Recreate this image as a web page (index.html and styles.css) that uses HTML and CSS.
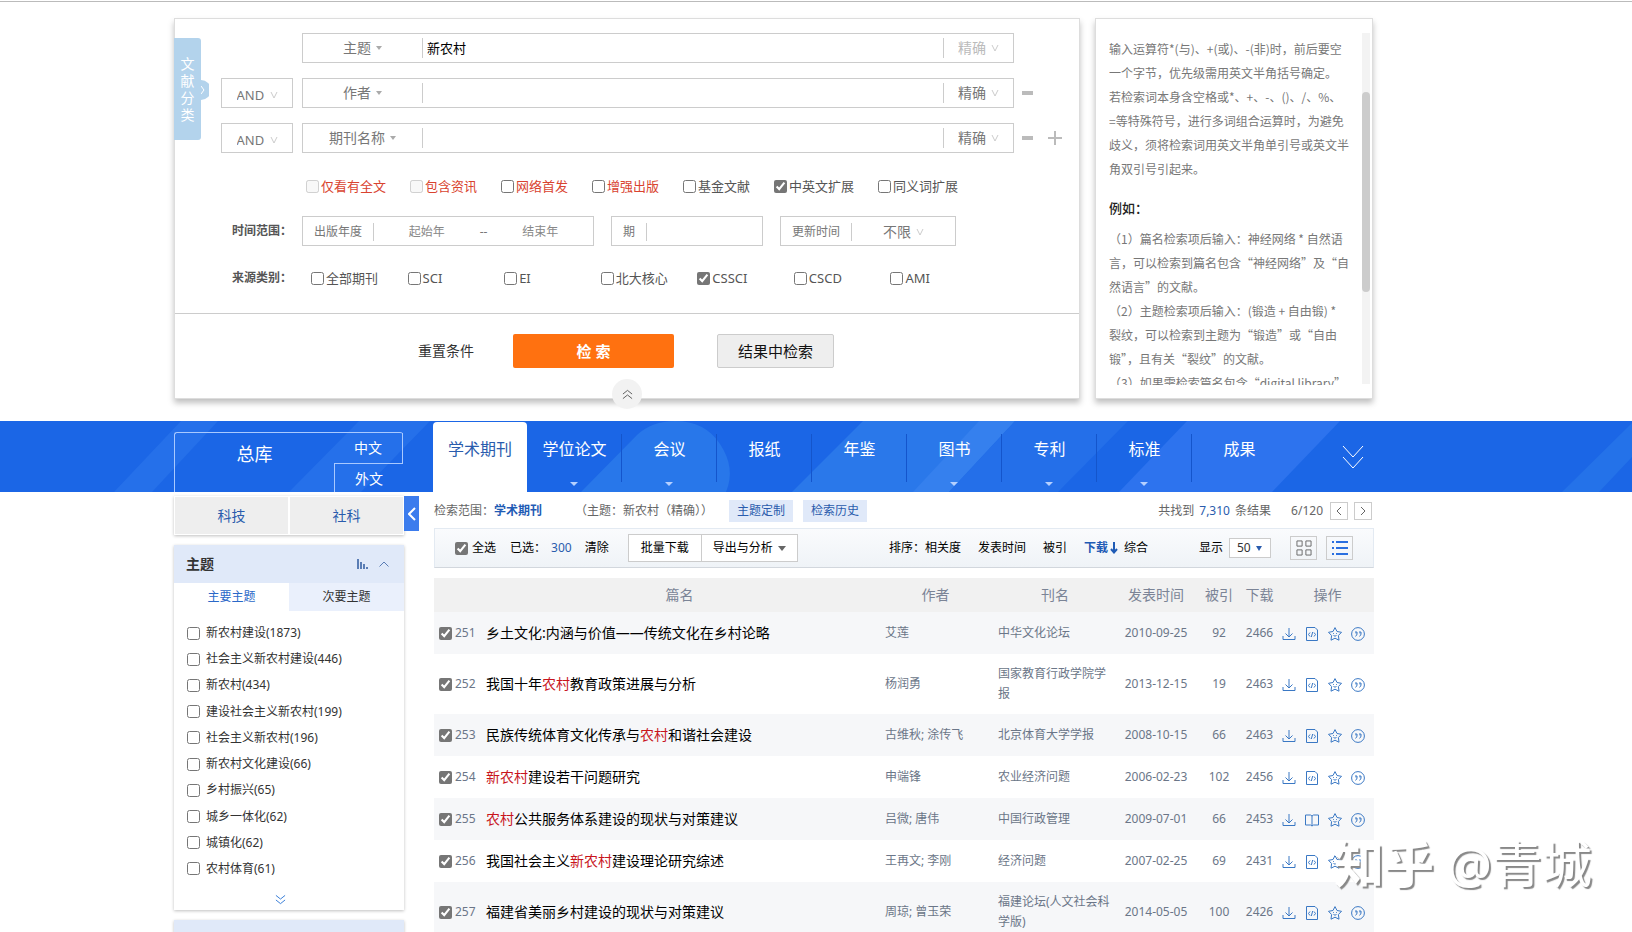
FILE: index.html
```
<!DOCTYPE html>
<html lang="zh-CN">
<head>
    <meta charset="UTF-8">
    <meta name="viewport" content="width=device-width, initial-scale=1.0">
    <title>高级检索</title>
    <link rel="stylesheet" href="styles.css">
</head>
<body>
    <svg class="icon-defs" aria-hidden="true">
        <symbol id="i-down" viewBox="0 0 14 14"><path d="M7 1v9M3.500 6.500L7 10l3.500-3.500M1 9v3.500h12V9" /></symbol>
        <symbol id="i-html" viewBox="0 0 14 14"><path d="M1.500 .5h8.500l2.500 2.500v10.500h-11zM5 5.500L3.500 7.500L5 9.500M9 5.500l1.500 2L9 9.500M7.700 5L6.300 10" /></symbol>
        <symbol id="i-book" viewBox="0 0 14 14"><path d="M.5 2h5L7 3l1.500-1h5v10h-5L7 13l-1.500-1h-5zM7 3v10" /></symbol>
        <symbol id="i-star" viewBox="0 0 14 14"><path d="M7 .6l2 3.900 4.500 .8-3.100 3.200 .6 4.700L7 11.200l-4 2 .6-4.700L.5 5.300l4.500-.8z" /><path d="M5 6.500h.8M8.200 6.500H9M5.500 8.500q1.500 1.300 3 0" /></symbol>
        <symbol id="i-quote" viewBox="0 0 14 14"><circle cx="7" cy="7" r="6.400" /><path d="M4 5h2v2q0 1.700-1.700 2.300M8 5h2v2q0 1.700-1.700 2.300M4.500 6h1M8.500 6h1" /></symbol>
        <symbol id="i-v" viewBox="0 0 8 8"><path d="M1 1l3 6 3-6" /></symbol>
        <symbol id="i-double" viewBox="0 0 12 12"><path d="M1 1.500l5 4 5-4M1 6.500l5 4 5-4" /></symbol>
    </svg>

    <div class="top-line"></div>

    <div class="search-area">
        <form class="search-panel">
            <button type="button" class="side-tab">文<br>献<br>分<br>类
                <svg class="side-arrow" viewBox="0 0 8 20"><path d="M0 0a10 10 0 0 1 0 20z" fill="#b3d3ec" /><path d="M0 6l3 4-3 4" fill="none" stroke="#fff" /></svg>
            </button>

            <div class="rows">
                <div class="row">
                    <div class="logic-space"></div>
                    <div class="field">
                        <div class="pick"><select aria-label="检索项"><option>主题</option></select><i class="caret"></i></div>
                        <input type="text" aria-label="检索词" value="新农村">
                        <div class="match off"><select aria-label="匹配方式"><option>精确</option></select><svg class="v"><use href="#i-v" /></svg></div>
                    </div>
                    <div class="ops"></div>
                </div>
                <div class="row">
                    <div class="logic"><select aria-label="逻辑关系"><option>AND</option></select><svg class="v"><use href="#i-v" /></svg></div>
                    <div class="field">
                        <div class="pick"><select aria-label="检索项"><option>作者</option></select><i class="caret"></i></div>
                        <input type="text" aria-label="检索词">
                        <div class="match"><select aria-label="匹配方式"><option>精确</option></select><svg class="v"><use href="#i-v" /></svg></div>
                    </div>
                    <div class="ops"><button type="button" class="minus" aria-label="删除"></button></div>
                </div>
                <div class="row">
                    <div class="logic"><select aria-label="逻辑关系"><option>AND</option></select><svg class="v"><use href="#i-v" /></svg></div>
                    <div class="field">
                        <div class="pick"><select aria-label="检索项"><option>期刊名称</option></select><i class="caret"></i></div>
                        <input type="text" aria-label="检索词">
                        <div class="match"><select aria-label="匹配方式"><option>精确</option></select><svg class="v"><use href="#i-v" /></svg></div>
                    </div>
                    <div class="ops"><button type="button" class="minus" aria-label="删除"></button><button type="button" class="plus" aria-label="增加"></button></div>
                </div>
            </div>

            <div class="options">
                <label class="red"><input type="checkbox" disabled>仅看有全文</label>
                <label class="red"><input type="checkbox" disabled>包含资讯</label>
                <label class="red"><input type="checkbox">网络首发</label>
                <label class="red"><input type="checkbox">增强出版</label>
                <label><input type="checkbox">基金文献</label>
                <label><input type="checkbox" checked>中英文扩展</label>
                <label><input type="checkbox">同义词扩展</label>
            </div>

            <div class="line time-line">
                <b>时间范围：</b>
                <div class="box box-year">
                    <span>出版年度</span>
                    <input type="text" aria-label="起始年" placeholder="起始年">
                    <em>--</em>
                    <input type="text" aria-label="结束年" placeholder="结束年">
                </div>
                <div class="box box-issue"><label for="issue">期</label><input type="text" id="issue"></div>
                <div class="box box-update"><span>更新时间</span><div class="pick-time"><select aria-label="更新时间"><option>不限</option></select><svg class="v"><use href="#i-v" /></svg></div></div>
            </div>

            <div class="line source-line">
                <b>来源类别：</b>
                <div class="sources">
                    <label><input type="checkbox">全部期刊</label>
                    <label><input type="checkbox">SCI</label>
                    <label><input type="checkbox">EI</label>
                    <label><input type="checkbox">北大核心</label>
                    <label><input type="checkbox" checked>CSSCI</label>
                    <label><input type="checkbox">CSCD</label>
                    <label><input type="checkbox">AMI</label>
                </div>
            </div>

            <div class="buttons">
                <button type="reset" class="btn-reset">重置条件</button>
                <button type="button" class="btn-search">检 索</button>
                <button type="button" class="btn-within">结果中检索</button>
            </div>
            <button type="button" class="fold" aria-label="收起"><svg viewBox="0 0 12 12"><use href="#i-double" /></svg></button>
        </form>

        <aside class="help">
            <div class="help-text">
                <p>输入运算符*(与)、+(或)、-(非)时，前后要空<br>一个字节，优先级需用英文半角括号确定。<br>若检索词本身含空格或*、+、-、()、/、%、<br>=等特殊符号，进行多词组合运算时，为避免<br>歧义，须将检索词用英文半角单引号或英文半<br>角双引号引起来。</p>
                <h4>例如：</h4>
                <p>（1）篇名检索项后输入：神经网络 * 自然语<br>言，可以检索到篇名包含“神经网络”及“自<br>然语言”的文献。<br>（2）主题检索项后输入：(锻造 + 自由锻) *<br>裂纹，可以检索到主题为“锻造”或“自由<br>锻”，且有关“裂纹”的文献。<br>（3）如果需检索篇名包含“digital library”</p>
            </div>
            <div class="help-bar"><i></i></div>
        </aside>
    </div>

    <nav class="nav">
        <svg class="nav-bg" viewBox="0 0 1632 71" preserveAspectRatio="none">
            <path d="M181 0h37l-66 71h-38z" fill="#2570ea" />
            <path d="M359 0h71l-69 71h-72z" fill="#2570ea" />
            <path d="M581 71L637 14Q652 0 675 0Q705 0 720 23Q736 47 726 71z" fill="#2877ea" />
            <path d="M863 0h152l-66 71H792z" fill="#2a78ea" />
            <path d="M979 0h36l-66 71h-36z" fill="#3580ee" />
            <path d="M1015 0h113l-70 71H949z" fill="#246fe9" />
            <path d="M1187 0h153l-68 71h-153z" fill="#2d73ee" />
            <path d="M1632 0v36l-33 35h-37l70-69z" fill="#2472e9" />
        </svg>
        <div class="nav-in">
            <div class="all">
                <a href="#" class="all-name">总库</a>
                <div class="langs"><a href="#">中文</a><a href="#">外文</a></div>
            </div>
            <div class="tabs">
                <a href="#" class="on">学术期刊</a>
                <a href="#" class="more">学位论文</a>
                <a href="#" class="more">会议</a>
                <a href="#">报纸</a>
                <a href="#">年鉴</a>
                <a href="#" class="more">图书</a>
                <a href="#" class="more">专利</a>
                <a href="#" class="more">标准</a>
                <a href="#">成果</a>
            </div>
            <button class="nav-more" aria-label="更多"><svg viewBox="0 0 22 24"><path d="M1 1l10 11L21 1M1 12l10 11 10-11" /></svg></button>
        </div>
    </nav>

    <div class="content">
        <div class="sidebar">
            <div class="kinds"><a href="#">科技</a><a href="#">社科</a></div>
            <button class="toggle" aria-label="收起侧栏"><svg viewBox="0 0 8 14"><path d="M7 1L1 7l6 6" /></svg></button>

            <div class="group">
                <div class="group-head">
                    <b>主题</b>
                    <svg class="bars" viewBox="0 0 12 10"><path d="M1 0v10M4 3v7M7 5v5M10 8v2" /></svg>
                    <svg class="up" viewBox="0 0 10 6"><path d="M.5 5.500L5 1l4.500 4.500" /></svg>
                </div>
                <div class="group-tabs"><a href="#" class="on">主要主题</a><a href="#">次要主题</a></div>
                <div class="group-list">
                    <label><input type="checkbox">新农村建设(1873)</label>
                    <label><input type="checkbox">社会主义新农村建设(446)</label>
                    <label><input type="checkbox">新农村(434)</label>
                    <label><input type="checkbox">建设社会主义新农村(199)</label>
                    <label><input type="checkbox">社会主义新农村(196)</label>
                    <label><input type="checkbox">新农村文化建设(66)</label>
                    <label><input type="checkbox">乡村振兴(65)</label>
                    <label><input type="checkbox">城乡一体化(62)</label>
                    <label><input type="checkbox">城镇化(62)</label>
                    <label><input type="checkbox">农村体育(61)</label>
                </div>
                <button class="group-more" aria-label="展开"><svg viewBox="0 0 12 12"><use href="#i-double" /></svg></button>
            </div>
            <div class="group">
                <div class="group-head"></div>
            </div>
        </div>

        <main class="main">
            <div class="scope">
                <span>检索范围：</span><a href="#" class="scope-name">学术期刊</a>
                <span class="scope-query">（主题：新农村（精确））</span>
                <a href="#" class="tag">主题定制</a>
                <a href="#" class="tag">检索历史</a>
                <div class="count">共找到 <em>7,310</em> 条结果</div>
                <span class="page">6/120</span>
                <button class="turn" aria-label="上一页"><svg viewBox="0 0 6 8"><path d="M5 0L1 4l4 4" /></svg></button>
                <button class="turn" aria-label="下一页"><svg viewBox="0 0 6 8"><path d="M1 0l4 4-4 4" /></svg></button>
            </div>

            <div class="toolbar">
                <label class="check-all"><input type="checkbox" checked>全选</label>
                <span class="chosen">已选：<em>300</em></span>
                <a href="#">清除</a>
                <div class="actions"><button>批量下载</button><button>导出与分析<i class="caret dark"></i></button></div>
                <div class="sort">
                    <span>排序：</span><a href="#">相关度</a><a href="#">发表时间</a><a href="#">被引</a><a href="#" class="on">下载<svg viewBox="0 0 8 12"><path d="M4 0v10M1 7l3 3.500L7 7" /></svg></a><a href="#">综合</a>
                </div>
                <label class="show" for="size">显示</label>
                <div class="size"><select id="size"><option>50</option></select><i class="caret blue"></i></div>
                <button class="view" aria-label="详情"><svg viewBox="0 0 16 17"><path d="M.5 1h5.500v5.500H.5zM10 1h5.500v5.500H10zM.5 10.500h5.500V16H.5zM10 10.500h5.500V16H10z" /></svg></button>
                <button class="view on" aria-label="列表"><svg viewBox="0 0 16 16"><path d="M0 2h2M4 2h12M0 8h2M4 8h12M0 14h2M4 14h12" /></svg></button>
            </div>

            <table class="result">
                <colgroup>
                    <col class="c-no"><col><col class="c-author"><col class="c-source"><col class="c-date"><col class="c-quote"><col class="c-down"><col class="c-ops">
                </colgroup>
                <thead>
                    <tr><th></th><th>篇名</th><th>作者</th><th>刊名</th><th>发表时间</th><th>被引</th><th>下载</th><th>操作</th></tr>
                </thead>
                <tbody>
                    <tr>
                        <td class="no"><label><input type="checkbox" checked>251</label></td>
                        <td class="name"><a href="#">乡土文化:内涵与价值——传统文化在乡村论略</a></td>
                        <td class="author">艾莲</td>
                        <td>中华文化论坛</td>
                        <td class="num">2010-09-25</td><td class="num">92</td><td class="num">2466</td>
                        <td class="icons"><a href="#" aria-label="下载"><svg><use href="#i-down" /></svg></a><a href="#" aria-label="HTML阅读"><svg><use href="#i-html" /></svg></a><a href="#" aria-label="收藏"><svg><use href="#i-star" /></svg></a><a href="#" aria-label="引用"><svg><use href="#i-quote" /></svg></a></td>
                    </tr>
                    <tr>
                        <td class="no"><label><input type="checkbox" checked>252</label></td>
                        <td class="name"><a href="#">我国十年<mark>农村</mark>教育政策进展与分析</a></td>
                        <td class="author">杨润勇</td>
                        <td>国家教育行政学院学报</td>
                        <td class="num">2013-12-15</td><td class="num">19</td><td class="num">2463</td>
                        <td class="icons"><a href="#" aria-label="下载"><svg><use href="#i-down" /></svg></a><a href="#" aria-label="HTML阅读"><svg><use href="#i-html" /></svg></a><a href="#" aria-label="收藏"><svg><use href="#i-star" /></svg></a><a href="#" aria-label="引用"><svg><use href="#i-quote" /></svg></a></td>
                    </tr>
                    <tr>
                        <td class="no"><label><input type="checkbox" checked>253</label></td>
                        <td class="name"><a href="#">民族传统体育文化传承与<mark>农村</mark>和谐社会建设</a></td>
                        <td class="author">古维秋; 涂传飞</td>
                        <td>北京体育大学学报</td>
                        <td class="num">2008-10-15</td><td class="num">66</td><td class="num">2463</td>
                        <td class="icons"><a href="#" aria-label="下载"><svg><use href="#i-down" /></svg></a><a href="#" aria-label="HTML阅读"><svg><use href="#i-html" /></svg></a><a href="#" aria-label="收藏"><svg><use href="#i-star" /></svg></a><a href="#" aria-label="引用"><svg><use href="#i-quote" /></svg></a></td>
                    </tr>
                    <tr>
                        <td class="no"><label><input type="checkbox" checked>254</label></td>
                        <td class="name"><a href="#"><mark>新农村</mark>建设若干问题研究</a></td>
                        <td class="author">申端锋</td>
                        <td>农业经济问题</td>
                        <td class="num">2006-02-23</td><td class="num">102</td><td class="num">2456</td>
                        <td class="icons"><a href="#" aria-label="下载"><svg><use href="#i-down" /></svg></a><a href="#" aria-label="HTML阅读"><svg><use href="#i-html" /></svg></a><a href="#" aria-label="收藏"><svg><use href="#i-star" /></svg></a><a href="#" aria-label="引用"><svg><use href="#i-quote" /></svg></a></td>
                    </tr>
                    <tr>
                        <td class="no"><label><input type="checkbox" checked>255</label></td>
                        <td class="name"><a href="#"><mark>农村</mark>公共服务体系建设的现状与对策建议</a></td>
                        <td class="author">吕微; 唐伟</td>
                        <td>中国行政管理</td>
                        <td class="num">2009-07-01</td><td class="num">66</td><td class="num">2453</td>
                        <td class="icons"><a href="#" aria-label="下载"><svg><use href="#i-down" /></svg></a><a href="#" aria-label="阅读"><svg><use href="#i-book" /></svg></a><a href="#" aria-label="收藏"><svg><use href="#i-star" /></svg></a><a href="#" aria-label="引用"><svg><use href="#i-quote" /></svg></a></td>
                    </tr>
                    <tr>
                        <td class="no"><label><input type="checkbox" checked>256</label></td>
                        <td class="name"><a href="#">我国社会主义<mark>新农村</mark>建设理论研究综述</a></td>
                        <td class="author">王再文; 李刚</td>
                        <td>经济问题</td>
                        <td class="num">2007-02-25</td><td class="num">69</td><td class="num">2431</td>
                        <td class="icons"><a href="#" aria-label="下载"><svg><use href="#i-down" /></svg></a><a href="#" aria-label="HTML阅读"><svg><use href="#i-html" /></svg></a><a href="#" aria-label="收藏"><svg><use href="#i-star" /></svg></a><a href="#" aria-label="引用"><svg><use href="#i-quote" /></svg></a></td>
                    </tr>
                    <tr>
                        <td class="no"><label><input type="checkbox" checked>257</label></td>
                        <td class="name"><a href="#">福建省美丽乡村建设的现状与对策建议</a></td>
                        <td class="author">周琼; 曾玉荣</td>
                        <td>福建论坛(人文社会科学版)</td>
                        <td class="num">2014-05-05</td><td class="num">100</td><td class="num">2426</td>
                        <td class="icons"><a href="#" aria-label="下载"><svg><use href="#i-down" /></svg></a><a href="#" aria-label="HTML阅读"><svg><use href="#i-html" /></svg></a><a href="#" aria-label="收藏"><svg><use href="#i-star" /></svg></a><a href="#" aria-label="引用"><svg><use href="#i-quote" /></svg></a></td>
                    </tr>
                </tbody>
            </table>
        </main>
    </div>

    <div class="watermark"><b>知乎</b> @青城</div>
</body>
</html>
```

FILE: styles.css
```
* {
    box-sizing: border-box;
}

body {
    margin: 0;
    height: 100vh;
    overflow: hidden;
    position: relative;
    background: #fff;
    color: #333;
    font-family: "Noto Sans", "Noto Sans CJK SC", sans-serif;
    font-size: 12px;
    line-height: 18px;
}

a {
    color: inherit;
    text-decoration: none;
}

em {
    font-style: normal;
}

button,
input,
select {
    font: inherit;
    color: inherit;
    margin: 0;
    padding: 0;
    border: none;
    background: none;
}

select {
    appearance: none;
    outline: none;
}

button {
    cursor: pointer;
}

input[type=text] {
    min-width: 0;
    outline: none;
}

input[type=checkbox] {
    width: 13px;
    height: 13px;
    flex: none;
    accent-color: #767676;
}

label {
    white-space: nowrap;
}

svg {
    display: block;
    flex: none;
    fill: none;
    stroke: currentColor;
}

.icon-defs {
    position: absolute;
    width: 0;
    height: 0;
}

.v {
    width: 8px;
    height: 8px;
    margin-left: 5px;
    color: #ccc;
}

.caret {
    width: 0;
    height: 0;
    margin-left: 5px;
    border: 3px solid transparent;
    border-top: 4px solid #aaa;
    border-bottom: none;
}

.caret.dark {
    border-width: 4px;
    border-top: 5px solid #666;
    border-bottom: none;
}

.caret.blue {
    border-top: 5px solid #2a5cad;
}

.top-line {
    height: 2px;
    border-bottom: 1px solid #bbb;
}

/* search form */
.search-area {
    display: grid;
    grid-template-columns: 1fr 278px;
    gap: 15px;
    margin: 16px 259px 22px 174px;
}

.search-panel,
.help {
    position: relative;
    height: 381px;
    border: 1px solid #ddd;
    box-shadow: 0 4px 6px rgba(0, 0, 0, 0.25);
}

.search-panel {
    padding-top: 14px;
}

.side-tab {
    position: absolute;
    left: -1px;
    top: 19px;
    width: 27px;
    height: 102px;
    border-radius: 0 3px 3px 0;
    background: #b3d3ec;
    color: #fff;
    font-size: 14px;
    line-height: 17px;
}

.side-arrow {
    position: absolute;
    left: 27px;
    top: 42px;
    width: 8px;
    height: 20px;
    stroke: none;
}

.rows {
    display: flex;
    flex-direction: column;
    gap: 15px;
    padding-left: 46px;
}

.row {
    display: flex;
    height: 30px;
}

.logic-space,
.logic {
    width: 72px;
    margin-right: 9px;
}

.logic,
.pick,
.match,
.pick-time {
    display: flex;
    align-items: center;
    justify-content: center;
    color: #777;
}

.logic {
    border: 1px solid #ccc;
    font-size: 13px;
    padding-top: 3px;
}

.field {
    display: flex;
    flex: 1;
    align-items: center;
    border: 1px solid #ccc;
    font-size: 14px;
}

.pick {
    width: 120px;
    height: 20px;
    border-right: 1px solid #ccc;
}

.match {
    width: 70px;
    height: 20px;
    border-left: 1px solid #ccc;
}

.match.off {
    color: #bbb;
}

.field input {
    flex: 1;
    padding-left: 4px;
    font-size: 13px;
    color: #000;
}

.ops {
    display: flex;
    align-items: center;
    gap: 15px;
    width: 65px;
    padding-left: 8px;
}

.minus {
    width: 11px;
    height: 4px;
    background: #bbb;
}

.plus {
    width: 14px;
    height: 14px;
    background: linear-gradient(#bbb, #bbb) center / 14px 2px no-repeat, linear-gradient(#bbb, #bbb) center / 2px 14px no-repeat;
}

.options {
    display: flex;
    gap: 24px;
    margin-top: 24px;
    padding-left: 131px;
}

.options label,
.sources label {
    display: flex;
    align-items: center;
    gap: 2px;
    color: #555;
    font-size: 13px;
}

.options .red {
    color: #d9432f;
}

.line {
    display: flex;
    align-items: center;
    padding-left: 57px;
}

.line b {
    width: 70px;
    color: #555;
}

.time-line {
    margin-top: 21px;
}

.box {
    display: flex;
    align-items: center;
    height: 30px;
    padding-top: 1px;
    border: 1px solid #ccc;
    color: #777;
}

.box > span,
.box > label {
    padding: 0 11px;
    border-right: 1px solid #ccc;
}

.box input {
    flex: 1;
    width: 40px;
    text-align: center;
}

.box input::placeholder {
    color: #888;
}

.box-year {
    width: 292px;
}

.box-issue {
    width: 152px;
    margin: 0 17px;
}

.box-update {
    width: 176px;
}

.pick-time {
    flex: 1;
    font-size: 14px;
}

.source-line {
    margin-top: 23px;
    padding-bottom: 26px;
    border-bottom: 1px solid #ccc;
}

.sources {
    display: grid;
    grid-template-columns: repeat(7, 1fr);
    width: 676px;
    margin-left: 9px;
}

.buttons {
    display: flex;
    height: 84px;
    padding: 20px 0 30px 243px;
}

.btn-reset {
    font-size: 14px;
}

.btn-search {
    width: 161px;
    margin: 0 43px 0 39px;
    border-radius: 2px;
    background: #ff7110;
    color: #fff;
    font-size: 15px;
    font-weight: bold;
}

.btn-within {
    width: 117px;
    border: 1px solid #ccc;
    border-radius: 2px;
    background: #eee;
    color: #111;
    font-size: 15px;
}

.fold {
    position: absolute;
    left: 50%;
    bottom: -11px;
    width: 30px;
    height: 30px;
    margin-left: -15px;
    padding: 10px;
    border-radius: 50%;
    background: #f2f2f2;
    color: #555;
}

.fold svg {
    transform: rotate(180deg);
}

.help {
    display: flex;
    padding: 14px 2px 14px 13px;
}

.help-text {
    flex: 1;
    height: 352px;
    overflow: hidden;
    padding-top: 4px;
    color: #777;
    font-family: "Noto Sans CJK SC", sans-serif;
    line-height: 24px;
    white-space: nowrap;
}

.help-text p {
    margin: 0;
}

.help-text h4 {
    margin: 15px 0 7px;
    color: #222;
    font-size: 13px;
    font-weight: 500;
}

.help-bar {
    width: 8px;
    padding-top: 59px;
    background: #f3f3f3;
}

.help-bar i {
    display: block;
    height: 200px;
    border-radius: 4px;
    background: #ccc;
}

/* blue navigation */
.nav {
    position: relative;
    height: 71px;
    background: #1b66e6;
    color: #fff;
}

.nav-bg {
    position: absolute;
    width: 100%;
    height: 100%;
    stroke: none;
}

.nav-in {
    position: relative;
    display: flex;
    height: 100%;
    padding: 0 268px 0 174px;
}

.all {
    display: flex;
    width: 229px;
    height: 60px;
    margin: 11px 30px 0 0;
    border: 1px solid #a9c9ff;
    border-width: 1px 0 0 1px;
    border-radius: 3px 3px 0 0;
}

.all-name {
    flex: 1;
    text-align: center;
    font-size: 18px;
    line-height: 42px;
}

.langs {
    width: 69px;
    font-size: 14px;
    text-align: center;
}

.langs a {
    display: block;
    height: 31px;
    line-height: 29px;
    border: 1px solid #a9c9ff;
    border-width: 0 1px 1px 0;
}

.langs a + a {
    height: 28px;
    border-width: 0 0 0 1px;
}

.tabs {
    display: flex;
    flex: 1;
}

.tabs a {
    position: relative;
    width: 95px;
    margin-top: 1px;
    font-size: 16px;
    line-height: 54px;
    text-align: center;
}

.tabs a + a::after {
    content: "";
    position: absolute;
    right: 0;
    top: 12px;
    height: 48px;
    border-right: 1px solid #1455cc;
}

.tabs a:last-child::after {
    display: none;
}

.tabs .on {
    width: 94px;
    border-radius: 4px 4px 0 0;
    background: #fff;
    color: #2a5cad;
}

.tabs .more::before {
    content: "";
    position: absolute;
    left: 43px;
    bottom: 6px;
    border: 4px solid transparent;
    border-top-color: #b5d0ff;
    border-bottom: none;
}

.nav-more svg {
    width: 22px;
    height: 24px;
}

/* body */
.content {
    display: grid;
    grid-template-columns: 230px 1fr;
    gap: 30px;
    margin: 0 258px 0 174px;
}

.sidebar {
    position: relative;
    padding-top: 4px;
}

.kinds {
    display: flex;
    gap: 2px;
    height: 39px;
    padding: 1px;
    box-shadow: 0 1px 3px rgba(0, 0, 0, 0.25);
}

.kinds a {
    flex: 1;
    background: #eee;
    color: #2a5cad;
    font-size: 14px;
    line-height: 37px;
    text-align: center;
}

.toggle {
    position: absolute;
    left: 230px;
    top: 4px;
    width: 15px;
    height: 35px;
    padding: 0 4px;
    background: #3c7ced;
    color: #fff;
}

.toggle svg {
    width: 8px;
    height: 14px;
    stroke-width: 2;
}

.group {
    margin-top: 10px;
    box-shadow: 0 1px 3px rgba(0, 0, 0, 0.25);
}

.group-head {
    display: flex;
    align-items: center;
    gap: 10px;
    height: 38px;
    padding: 0 15px 0 12px;
    background: #e0e9f9;
}

.group-head b {
    flex: 1;
    font-size: 14px;
}

.bars {
    width: 12px;
    height: 10px;
    color: #5a7db5;
    stroke-width: 2;
}

.up {
    width: 10px;
    height: 6px;
    color: #5a7db5;
}

.group-tabs {
    display: flex;
}

.group-tabs a {
    flex: 1;
    height: 28px;
    background: #eaf0fc;
    line-height: 28px;
    text-align: center;
}

.group-tabs .on {
    background: #fff;
    color: #2a68c8;
}

.group-list {
    display: flex;
    flex-direction: column;
    justify-content: space-between;
    height: 271px;
    padding: 9px 13px 0;
}

.group-list label {
    display: flex;
    align-items: center;
    gap: 6px;
    height: 26px;
}

.group-more {
    display: block;
    width: 100%;
    height: 28px;
    padding: 6px 0 0 101px;
    color: #2a74d4;
}

.group-more svg,
.fold svg {
    width: 11px;
    height: 11px;
}

.main {
    min-width: 0;
}

.scope {
    display: flex;
    align-items: center;
    height: 36px;
    padding: 2px 2px 0 0;
    color: #666;
}

.scope-name {
    color: #1f5bb5;
    font-weight: bold;
}

.scope-query {
    margin: 0 16px 0 33px;
}

.tag {
    height: 22px;
    margin-right: 10px;
    padding: 0 8px;
    background: #e0e9f9;
    color: #2a5cad;
    line-height: 22px;
}

.count {
    margin-left: auto;
}

.count em {
    color: #2a5cad;
    margin: 0 2px;
}

.page {
    margin: 0 7px 0 20px;
}

.turn {
    display: flex;
    align-items: center;
    justify-content: center;
    width: 18px;
    height: 18px;
    border: 1px solid #ccc;
}

.turn + .turn {
    margin-left: 6px;
}

.turn svg {
    width: 6px;
    height: 8px;
}

.toolbar {
    display: flex;
    align-items: center;
    height: 40px;
    padding: 0 20px;
    border: 1px solid #e3eaf2;
    border-bottom-color: #d2d7dd;
    background: linear-gradient(#fafbfd, #eff3f7);
    color: #000;
}

.check-all {
    display: flex;
    align-items: center;
    gap: 4px;
}

.chosen {
    margin: 0 13px 0 14px;
}

.chosen em {
    margin-left: 5px;
    color: #2a5cad;
}

.actions {
    display: flex;
    margin-left: 19px;
    border: 1px solid #ccc;
    background: #fff;
}

.actions button {
    display: flex;
    align-items: center;
    height: 26px;
    padding: 0 12px;
}

.actions button + button {
    padding: 0 11px;
    border-left: 1px solid #ccc;
}

.sort {
    display: flex;
    margin-left: auto;
}

.sort a {
    margin-right: 17px;
}

.sort .on {
    display: flex;
    align-items: center;
    gap: 2px;
    margin-right: 6px;
    color: #1f5bb5;
    font-weight: bold;
}

.sort svg {
    width: 8px;
    height: 12px;
    stroke-width: 2;
}

.sort a:last-child {
    margin-right: 51px;
}

.size {
    display: flex;
    align-items: center;
    width: 42px;
    height: 20px;
    margin: 0 19px 0 6px;
    padding-left: 7px;
    border: 1px solid #ccc;
    background: #fff;
    color: #333;
}

.view {
    display: flex;
    align-items: center;
    justify-content: center;
    width: 27px;
    height: 24px;
    border: 1px solid #ccc;
    color: #666;
}

.view.on {
    margin-left: 9px;
    color: #2a6fe0;
}

.view svg {
    width: 16px;
    height: 16px;
}

.view.on svg {
    stroke-width: 2;
}

.result {
    width: 100%;
    margin-top: 10px;
    border-collapse: collapse;
    table-layout: fixed;
    color: #6b7688;
}

.c-no { width: 52px; }
.c-author { width: 125px; }
.c-source { width: 114px; }
.c-date { width: 88px; }
.c-quote { width: 38px; }
.c-down { width: 43px; }
.c-ops { width: 93px; }

.result th,
.result td {
    padding: 0;
}

.result th {
    height: 34px;
    background: #f1f1f1;
    color: #7b8496;
    font-size: 14px;
    font-weight: normal;
}

.result td {
    height: 42px;
    padding: 10px 0;
    line-height: 20px;
}

.result tbody tr:nth-child(odd) {
    background: #f6f7f9;
}

.result .no label {
    display: flex;
    align-items: center;
    gap: 3px;
    padding-left: 5px;
}

.result .name {
    color: #000;
    font-size: 14px;
}

.name mark {
    background: none;
    color: #c8151d;
}

.result .author {
    padding-left: 12px;
}

.result .num {
    text-align: center;
}

.icons a {
    display: inline-block;
    margin-left: 9px;
    color: #3a78c4;
    vertical-align: text-bottom;
}

.icons a:first-child {
    margin-left: 1px;
}

.icons svg {
    width: 14px;
    height: 14px;
}

.watermark {
    position: absolute;
    right: 40px;
    bottom: 38px;
    color: #fff;
    font-size: 50px;
    line-height: 60px;
    text-shadow: 2px 2px 1px #888;
    white-space: pre;
}
```
